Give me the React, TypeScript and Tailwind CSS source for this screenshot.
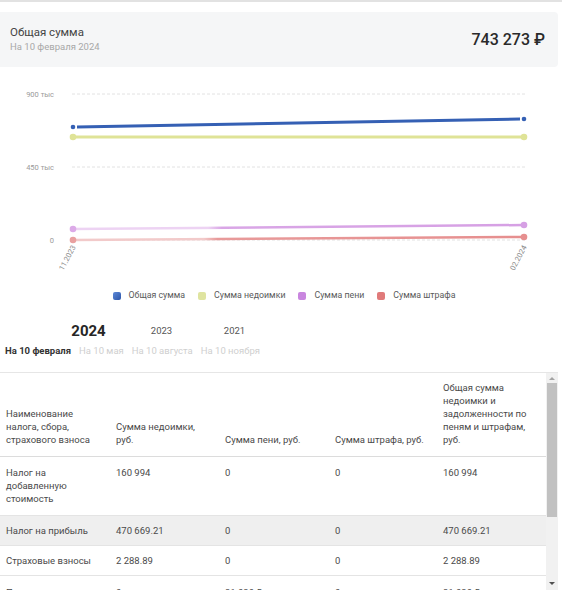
const rows = [
  { name: 'Налог на добавленную стоимость', debt: '160 994', peni: '0', fine: '0', total: '160 994' },
  { name: 'Налог на прибыль', debt: '470 669.21', peni: '0', fine: '0', total: '470 669.21' },
  { name: 'Страховые взносы', debt: '2 288.89', peni: '0', fine: '0', total: '2 288.89' },
  { name: 'Пени по налогу', debt: '0', peni: '31 030.5', fine: '0', total: '31 030.5' },
];

const legend = [
  { label: 'Общая сумма', color: 'bg-[linear-gradient(135deg,#5d8ad8,#2d55a8)]' },
  { label: 'Сумма недоимки', color: 'bg-[#dfe4a0]' },
  { label: 'Сумма пени', color: 'bg-[#c986df]' },
  { label: 'Сумма штрафа', color: 'bg-[#e07a7a]' },
];

function Chart() {
  return (
    <svg className="block" width={562} height={218} viewBox="0 67 562 218">
      <defs>
        <linearGradient id="pur" gradientUnits="userSpaceOnUse" x1="73" y1="0" x2="524" y2="0">
          <stop offset="0" stopColor="#edd3f3" />
          <stop offset="0.3" stopColor="#edd3f3" />
          <stop offset="0.33" stopColor="#d9a6e6" />
          <stop offset="1" stopColor="#d6a0e4" />
        </linearGradient>
        <linearGradient id="red" gradientUnits="userSpaceOnUse" x1="73" y1="0" x2="524" y2="0">
          <stop offset="0" stopColor="#f2caca" />
          <stop offset="0.29" stopColor="#f2caca" />
          <stop offset="0.32" stopColor="#e89a9a" />
          <stop offset="1" stopColor="#e68f8f" />
        </linearGradient>
      </defs>
      {/* grid */}
      {[94, 167, 240].map((y) => (
        <line key={y} x1={72} x2={525} y1={y} y2={y} stroke="#e2e2e2" strokeWidth={1} strokeDasharray="3 2" />
      ))}
      <g fontFamily="Roboto, sans-serif" fontSize={7.5} fill="#9a9a9a" textAnchor="end">
        <text x={54} y={97}>900 тыс</text>
        <text x={54} y={170}>450 тыс</text>
        <text x={54} y={243}>0</text>
      </g>
      {/* lines */}
      <line x1={77} y1={127} x2={520} y2={119} stroke="#3560b4" strokeWidth={3} />
      <circle cx={73} cy={127} r={2.3} fill="#3560b4" />
      <circle cx={524} cy={119} r={2.3} fill="#3560b4" />

      <line x1={73} y1={137} x2={524} y2={137} stroke="#dfe397" strokeWidth={3} />
      <circle cx={73} cy={137} r={3.3} fill="#dfe397" />
      <circle cx={524} cy={137} r={3.3} fill="#dfe397" />

      <line x1={73} y1={229} x2={524} y2={225} stroke="url(#pur)" strokeWidth={2.5} />
      <circle cx={73} cy={229} r={3.3} fill="#dcaae8" />
      <circle cx={524} cy={225} r={3.3} fill="#d6a0e4" />

      <line x1={73} y1={240} x2={524} y2={237} stroke="url(#red)" strokeWidth={2.5} />
      <circle cx={73} cy={240} r={3.3} fill="#e9a0a0" />
      <circle cx={524} cy={237} r={3.3} fill="#e68f8f" />

      <g fontFamily="Roboto, sans-serif" fontSize={7.5} fill="#8a8a8a" textAnchor="end">
        <text transform="translate(76 247) rotate(-62)">11.2023</text>
        <text transform="translate(527 247) rotate(-62)">02.2024</text>
      </g>
    </svg>
  );
}

export default function App() {
  return (
    <div className="w-[562px] h-[600px] overflow-hidden bg-white font-['Roboto',sans-serif] text-[#444]">
      <div className="h-[2px] bg-[#e2e2e2]" />

      {/* Summary card */}
      <div className="mt-[10px] mr-[4px] h-[55px] bg-[#f5f6f7] rounded-r-[4px] flex items-center justify-between pl-[10px] pr-[13px]">
        <div className="flex flex-col -mt-[2px]">
          <span className="text-[11.5px] leading-[15px] text-[#444]">Общая сумма</span>
          <span className="text-[9.5px] leading-[13px] text-[#a8a8a8]">На 10 февраля 2024</span>
        </div>
        <span className="text-[16px] font-medium text-[#2a2a2a]">743 273 ₽</span>
      </div>

      <Chart />

      {/* Legend */}
      <div className="h-[22px] flex items-center justify-center gap-[13px] pl-[6px]">
        {legend.map((l) => (
          <div key={l.label} className="flex items-center gap-[8px]">
            <span className={`w-[8px] h-[8px] rounded-[2px] ${l.color}`} />
            <span className="text-[8.8px] text-[#5a5a5a]">{l.label}</span>
          </div>
        ))}
      </div>

      {/* Year tabs */}
      <div className="mt-[12px] h-[24px] flex items-center pl-[52px]">
        <span className="w-[73px] text-center text-[15px] font-bold text-[#262626]">2024</span>
        <span className="w-[73px] text-center text-[9.5px] text-[#555]">2023</span>
        <span className="w-[73px] text-center text-[9.5px] text-[#555]">2021</span>
      </div>
      <div className="h-[16px] flex items-center gap-[8px] pl-[5px] text-[9.5px]">
        <span className="font-bold text-[#333]">На 10 февраля</span>
        <span className="text-[#cfcfcf]">На 10 мая</span>
        <span className="text-[#cfcfcf]">На 10 августа</span>
        <span className="text-[#cfcfcf]">На 10 ноября</span>
      </div>

      <div className="mt-[13px] w-[558px] border-t border-[#e6e6e6]" />

      {/* Table */}
      <div className="flex h-[217px] overflow-hidden">
        <table className="w-[546px] table-fixed border-collapse text-[9.5px] leading-[13px] text-[#4a4a4a] self-start">
          <colgroup>
            <col className="w-[110px]" />
            <col className="w-[109px]" />
            <col className="w-[110px]" />
            <col className="w-[108px]" />
            <col className="w-[109px]" />
          </colgroup>
          <thead>
            <tr className="border-b border-[#dcdcdc]">
              <th className="align-bottom text-left font-normal px-[6px] pt-[8px] pb-[10px]">Наименование налога, сбора, страхового взноса</th>
              <th className="align-bottom text-left font-normal px-[6px] pt-[8px] pb-[10px]">Сумма недоимки, руб.</th>
              <th className="align-bottom text-left font-normal px-[6px] pt-[8px] pb-[10px]">Сумма пени, руб.</th>
              <th className="align-bottom text-left font-normal px-[6px] pt-[8px] pb-[10px]">Сумма штрафа, руб.</th>
              <th className="align-bottom text-left font-normal px-[6px] pt-[8px] pb-[10px]">Общая сумма недоимки и задолженности по пеням и штрафам, руб.</th>
            </tr>
          </thead>
          <tbody>
            {rows.map((r, i) => (
              <tr key={r.name} className={`border-b border-[#e4e4e4] ${i === 1 ? 'bg-[#efefef]' : ''}`}>
                <td className={`align-top px-[6px] ${i === 0 ? 'pt-[9px] pb-[10px]' : i === 3 ? 'pt-[10px] pb-[8px]' : 'pt-[8px] pb-[8px]'}`}>{r.name}</td>
                <td className={`align-top px-[6px] ${i === 0 ? 'pt-[9px] pb-[10px]' : i === 3 ? 'pt-[10px] pb-[8px]' : 'pt-[8px] pb-[8px]'}`}>{r.debt}</td>
                <td className={`align-top px-[6px] ${i === 0 ? 'pt-[9px] pb-[10px]' : i === 3 ? 'pt-[10px] pb-[8px]' : 'pt-[8px] pb-[8px]'}`}>{r.peni}</td>
                <td className={`align-top px-[6px] ${i === 0 ? 'pt-[9px] pb-[10px]' : i === 3 ? 'pt-[10px] pb-[8px]' : 'pt-[8px] pb-[8px]'}`}>{r.fine}</td>
                <td className={`align-top px-[6px] ${i === 0 ? 'pt-[9px] pb-[10px]' : i === 3 ? 'pt-[10px] pb-[8px]' : 'pt-[8px] pb-[8px]'}`}>{r.total}</td>
              </tr>
            ))}
          </tbody>
        </table>

        {/* Scrollbar */}
        <div className="w-[12px] h-[217px] bg-[#f1f1f1] flex flex-col items-center">
          <div className="h-[10px] flex items-center justify-center">
            <span className="w-0 h-0 border-x-[3px] border-x-transparent border-b-[3px] border-b-[#a3a3a3]" />
          </div>
          <div className="w-[10px] h-[134px] bg-[#c1c1c1]" />
          <div className="flex-1" />
          <div className="h-[10px] flex items-center justify-center mb-[2px]">
            <span className="w-0 h-0 border-x-[3px] border-x-transparent border-t-[3px] border-t-[#505050]" />
          </div>
        </div>
      </div>
    </div>
  );
}
